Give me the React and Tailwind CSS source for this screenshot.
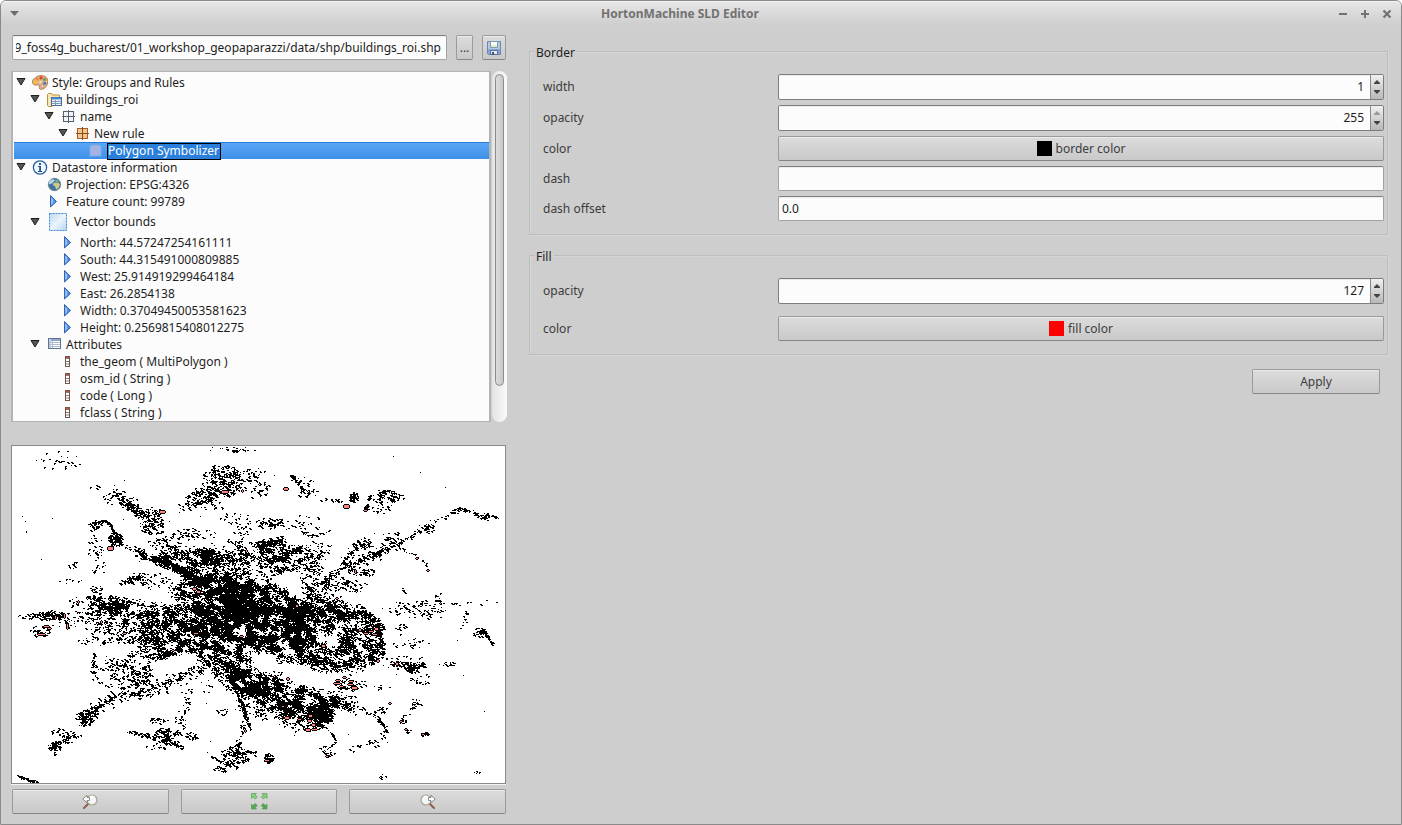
import { useEffect, useRef } from "react";

/* ---------- shared control styles ---------- */
const raised =
  "flex items-center justify-center rounded-[2px] border border-[#9a9a9a] border-b-[#868686] bg-linear-to-b from-[#dcdcdc] to-[#c9c9c9] text-[#3c3c3c] shadow-[inset_0_1px_0_#ececec]";
const field =
  "h-[25px] min-w-0 rounded-[2px] border border-[#a2a2a2] border-t-[#7f7f7f] bg-[#fcfcfc] text-[#1c1c1c] shadow-[inset_0_1px_0_#ececec] outline-none";

/* ---------- tree icons ---------- */
const Svg = ({ w = 16, h = 16, children }) => (
  <svg width={w} height={h} viewBox={`0 0 ${w} ${h}`} aria-hidden="true">
    {children}
  </svg>
);

const icons = {
  palette: (
    <Svg>
      <path
        d="M5 1.500C8-.2 14 .3 15.400 4.100c1 3-.2 7.300-3 9.100-2 1.400-4.400 1.600-5 .3-.5-1.200.6-2.300-.3-3.200-.9-.8-2.200 0-3.800-.2C1 9.800 0 8 .5 5.700 1 4 3.200 3.200 5 1.500Z"
        fill="#e3b284"
        stroke="#a8653a"
        strokeWidth=".8"
      />
      <circle cx="3.300" cy="6.900" r="1.500" fill="#f6c52c" />
      <circle cx="5.300" cy="3.900" r="1.500" fill="#ee8a2e" />
      <circle cx="9" cy="2.900" r="1.600" fill="#e23b2c" />
      <circle cx="12.500" cy="4.600" r="1.500" fill="#4fa653" />
      <circle cx="12.700" cy="8.300" r="1.600" fill="#3b82c4" />
      <circle cx="10.300" cy="11.300" r="1.400" fill="#f4ede6" stroke="#a8653a" strokeWidth=".5" />
      <circle cx="8.500" cy="7" r="1.200" fill="#f3ddc8" />
    </Svg>
  ),
  folder: (
    <Svg>
      <path d="M1.500 13.500v-11l1-1h3l1 1.500h7v3H6v8.500H2.500Z" fill="#f8e6b4" stroke="#c08f3c" />
      <rect x="5.500" y="5.500" width="10" height="8" fill="#eef4fb" stroke="#4a6a94" />
      <path d="M6 6.500h9" stroke="#4a8ad0" strokeWidth="2" />
      <path d="M6 9.500h9M6 11.500h9M9.500 8v5" stroke="#7d99bd" strokeWidth="1" />
    </Svg>
  ),
  grid: (
    <Svg>
      <rect x="3.500" y="2.500" width="10" height="10" fill="#f1f3f6" stroke="#55606d" />
      <path d="M8.500 1v13M2 7.500h13" stroke="#55606d" />
    </Svg>
  ),
  rule: (
    <Svg>
      <rect x="3.500" y="2.500" width="10" height="10" fill="#f3c68f" stroke="#a65f24" />
      <path d="M8.500 1v13M2 7.500h13" stroke="#8a4c1b" />
    </Svg>
  ),
  polygon: (
    <Svg>
      <rect x="2" y="2" width="11" height="11" fill="#a3b4e2" stroke="#84a3e8" />
      <path d="M1 1h2v2H1zM12 1h2v2h-2zM1 12h2v2H1zM12 12h2v2h-2z" fill="#41b2fb" />
    </Svg>
  ),
  info: (
    <Svg>
      <circle cx="8" cy="7.500" r="6.600" fill="#f3f8fd" stroke="#27609f" strokeWidth="1.300" />
      <path d="M7 3h2v2H7zM6 6h3v5h1.200v1H6v-1h1.200V7H6z" fill="#1d5796" />
    </Svg>
  ),
  globe: (
    <Svg>
      <circle cx="8.500" cy="7.500" r="6.200" fill="#3f72b0" stroke="#6b7886" strokeWidth=".8" />
      <path d="M4 3.500c2-1.500 4-1.500 4.500-.5S7 5 6.500 6 4 6.500 3 7.500c-.4-1.500 0-3 1-4Z" fill="#b4d7ea" />
      <path d="M7.500 6c2-1 5-.5 6.500 1-.5 3-2 4.500-3.500 5.500C9 11 10 9.500 8.500 9 7 8.500 6.500 7 7.500 6Z" fill="#d3c982" />
      <path d="M9 2.500c2 0 3.500.8 4.500 2.500l-2 .6L9.500 5Z" fill="#7dac68" />
      <path d="M3 9.500l3 1.500 1 2.400C5 13 3.600 11.600 3 9.500Z" fill="#4d8a5a" />
    </Svg>
  ),
  play: (
    <Svg>
      <path d="M4.500 1.500 10.500 7.500l-6 5.500Z" fill="#4f8ce0" stroke="#3465b4" />
      <path d="M5.200 3.500v7.500l2-2V5.500Z" fill="#9cc2f5" />
    </Svg>
  ),
  bounds: (
    <Svg w={24} h={24}>
      <defs>
        <linearGradient id="bounds-fill" x1="0" y1="0" x2="1" y2="1">
          <stop offset="0" stopColor="#b8d8f4" />
          <stop offset=".5" stopColor="#eaf4fc" />
          <stop offset="1" stopColor="#b4d4f0" />
        </linearGradient>
      </defs>
      <rect x="3.500" y="3.500" width="17" height="17" fill="url(#bounds-fill)" stroke="#4385cc" strokeDasharray="2 1" />
    </Svg>
  ),
  table: (
    <Svg>
      <rect x="2.500" y="1.500" width="12" height="10" fill="#fff" stroke="#5f7494" />
      <path d="M3 3h11" stroke="#8ea6c8" strokeWidth="2" />
      <path d="M4 2v9" stroke="#c5d4e8" strokeWidth="2" />
      <path d="M3 5.500h11M3 7.500h11M3 9.500h11M6.500 4v7" stroke="#b0bdcf" />
    </Svg>
  ),
  column: (
    <Svg>
      <rect x="5.500" y="2.500" width="4" height="10" fill="#fff" stroke="#6d584b" />
      <path d="M6 3.500h3" stroke="#e2403a" />
      <path d="M6 4.500h3M6 7.500h3M6 10h3" stroke="#6d584b" strokeWidth=".8" />
    </Svg>
  ),
};

/* ---------- tree data: [level, icon, label, expandable] ---------- */
const rows = [
  [0, "palette", "Style: Groups and Rules", true],
  [1, "folder", "buildings_roi", true],
  [2, "grid", "name", true],
  [3, "rule", "New rule", true],
  [4, "polygon", "Polygon Symbolizer", false],
  [0, "info", "Datastore information", true],
  [1, "globe", "Projection: EPSG:4326", false],
  [1, "play", "Feature count: 99789", false],
  [1, "bounds", "Vector bounds", true],
  [2, "play", "North: 44.57247254161111", false],
  [2, "play", "South: 44.315491000809885", false],
  [2, "play", "West: 25.914919299464184", false],
  [2, "play", "East: 26.2854138", false],
  [2, "play", "Width: 0.37049450053581623", false],
  [2, "play", "Height: 0.2569815408012275", false],
  [1, "table", "Attributes", true],
  [2, "column", "the_geom ( MultiPolygon )", false],
  [2, "column", "osm_id ( String )", false],
  [2, "column", "code ( Long )", false],
  [2, "column", "fclass ( String )", false],
];
const indent = ["pl-0", "pl-[14px]", "pl-[28px]", "pl-[42px]", "pl-[56px]"];

function Tree() {
  return (
    <div className="flex h-[351px]">
      <ul
        id="tree"
        role="tree"
        aria-label="Style"
        className="min-w-0 flex-1 overflow-hidden border border-r-2 border-l-2 border-[#b4b4b4] bg-[#fcfcfc] pt-[2px] pl-px"
      >
        {rows.map(([level, icon, label, open]) => {
          const selected = icon === "polygon";
          return (
            <li
              key={label}
              role="treeitem"
              aria-selected={selected}
              aria-level={level + 1}
              className={`flex items-center ${icon === "bounds" ? "h-[24px]" : "h-[17px]"} ${indent[level]} ${
                selected ? "border-t border-[#2a7bd6] bg-linear-to-b from-[#5ba6f6] to-[#3d8fe8] text-white" : "text-[#1e1e1e]"
              }`}
            >
              <span className="flex w-[18px] shrink-0 justify-center pr-1">
                {open && (
                  <svg width="10" height="9" viewBox="0 0 10 9" aria-hidden="true">
                    <path d="M1 .5h8L5 7Z" fill="#555" stroke="#1f1f1f" />
                  </svg>
                )}
              </span>
              {icons[icon]}
              <span
                className={`ml-[3px] flex h-[17px] items-center border pr-px whitespace-nowrap ${
                  selected ? "border-black bg-[#2b7fdc]" : "border-transparent"
                }`}
              >
                {label}
              </span>
            </li>
          );
        })}
      </ul>
      <div className="ml-px w-[15px] rounded-full bg-linear-to-r from-[#e4e4e4] to-[#fafafa] px-[3px] pt-[3px]">
        <div
          role="scrollbar"
          aria-controls="tree"
          aria-valuenow={0}
          className="h-[312px] rounded-full border border-[#8c8c8c] bg-linear-to-r from-[#dcdcdc] to-[#c8c8c8]"
        />
      </div>
    </div>
  );
}

/* ---------- map of building footprints ---------- */
const MX = 12;
const MY = 446;
const MW = 493;
const MH = 337;

// [density, x1, y1, x2, y2, ...] filled areas
const areas = [
  [0.36, 205, 575, 240, 572, 268, 584, 300, 598, 340, 606, 382, 622, 384, 652, 362, 669, 330, 671, 300, 663, 262, 656, 244, 664, 250, 684, 240, 698, 218, 676, 196, 655, 190, 622, 198, 596],
  [0.5, 228, 580, 262, 582, 300, 602, 326, 616, 312, 640, 290, 652, 260, 650, 236, 640, 222, 612],
  [0.3, 184, 578, 230, 574, 236, 610, 230, 650, 206, 650, 196, 612],
  [0.5, 234, 664, 256, 672, 286, 678, 290, 686, 320, 692, 340, 696, 352, 706, 332, 712, 322, 728, 306, 718, 286, 718, 264, 708, 240, 690],
  [0.2, 86, 592, 130, 602, 190, 606, 198, 640, 180, 656, 150, 662, 130, 642, 92, 634, 100, 618],
  [0.24, 140, 610, 200, 604, 206, 650, 170, 658, 136, 640],
  [0.4, 86, 596, 104, 598, 142, 606, 146, 616, 110, 616, 92, 608],
  [0.24, 156, 545, 190, 548, 214, 554, 240, 572, 206, 590, 176, 574],
  [0.24, 182, 548, 220, 548, 210, 568, 186, 566],
  [0.18, 214, 538, 258, 544, 284, 556, 282, 575, 236, 574, 210, 556],
  [0.34, 168, 582, 186, 584, 206, 586, 210, 612, 190, 614, 178, 600],
  [0.16, 258, 550, 300, 545, 322, 548, 320, 562, 282, 572, 258, 570],
  [0.2, 298, 590, 330, 594, 360, 606, 380, 622, 340, 620, 300, 610],
  [0.12, 96, 662, 130, 654, 150, 666, 150, 684, 112, 690],
  [0.16, 125, 656, 180, 640, 190, 654, 150, 672, 138, 684, 120, 676],
  [0.12, 270, 714, 296, 718, 320, 722, 322, 732, 290, 728],
];

// [n, cx, cy, rx, ry] blobs
const blobs = [
  [26, 58, 459, 20, 9], [12, 67, 462, 8, 4], [8, 97, 487, 6, 2], [60, 113, 496, 10, 7], [50, 128, 502, 9, 6],
  [60, 148, 511, 14, 4], [190, 152, 524, 11, 10], [110, 198, 496, 12, 7], [360, 222, 480, 17, 14], [70, 212, 492, 14, 5],
  [70, 246, 474, 16, 6], [34, 233, 449, 24, 3], [24, 251, 488, 8, 8], [30, 262, 488, 6, 6], [24, 210, 504, 14, 5],
  [40, 95, 524, 6, 4], [190, 115, 539, 6, 6], [24, 94, 537, 8, 10], [26, 95, 552, 10, 5], [14, 74, 565, 6, 4],
  [24, 96, 567, 10, 6], [10, 70, 581, 12, 2], [70, 163, 543, 14, 6], [80, 193, 534, 20, 5], [40, 235, 520, 14, 8],
  [24, 242, 533, 8, 6], [100, 148, 579, 18, 7], [30, 96, 590, 6, 5], [18, 75, 602, 7, 5], [24, 302, 482, 10, 4],
  [90, 353, 497, 4, 4], [50, 366, 507, 2, 3], [150, 385, 498, 15, 7], [24, 380, 509, 8, 4], [30, 307, 492, 10, 4],
  [20, 330, 500, 10, 2], [90, 270, 523, 12, 5], [50, 300, 523, 18, 8], [70, 362, 544, 10, 5], [60, 391, 541, 10, 9],
  [80, 362, 571, 12, 4], [180, 322, 582, 22, 8], [60, 350, 586, 14, 6], [70, 312, 570, 8, 8], [60, 300, 562, 22, 10],
  [26, 400, 608, 14, 5], [60, 425, 607, 20, 6], [18, 470, 602, 24, 3], [26, 438, 600, 4, 10], [24, 24, 617, 6, 3],
  [180, 46, 615, 14, 4], [80, 40, 631, 9, 5], [90, 72, 620, 22, 8], [50, 88, 614, 10, 6], [120, 84, 718, 8, 7],
  [80, 54, 746, 5, 4], [60, 69, 737, 10, 5], [18, 58, 731, 6, 3], [200, 167, 735, 11, 8], [28, 158, 720, 8, 3],
  [24, 180, 720, 6, 8], [24, 187, 702, 4, 12], [30, 191, 736, 6, 3], [24, 158, 746, 10, 3], [190, 234, 755, 13, 8],
  [40, 220, 768, 6, 4], [26, 250, 753, 7, 3], [16, 205, 686, 8, 5], [14, 222, 711, 6, 3], [90, 268, 758, 5, 4],
  [260, 322, 716, 8, 8], [90, 405, 662, 20, 6], [80, 412, 669, 6, 3], [36, 410, 643, 16, 5], [18, 398, 628, 10, 8],
  [40, 420, 614, 24, 4], [14, 463, 620, 6, 8], [36, 478, 632, 8, 4], [20, 448, 664, 8, 2], [26, 420, 679, 10, 5],
  [16, 382, 687, 8, 2], [26, 415, 703, 5, 4], [26, 402, 721, 3, 2], [16, 407, 730, 3, 2], [30, 424, 734, 3, 2],
  [24, 380, 710, 6, 3], [30, 375, 640, 10, 14], [40, 325, 751, 8, 5], [8, 380, 776, 4, 2], [6, 475, 772, 4, 2],
  [100, 350, 684, 14, 5], [90, 340, 700, 16, 5], [24, 160, 690, 30, 8], [20, 110, 675, 12, 12], [50, 262, 712, 10, 6],
  [110, 270, 545, 14, 4], [90, 316, 548, 14, 6], [150, 310, 661, 30, 4], [40, 100, 640, 20, 5],
];

// [n, width, x1, y1, x2, y2, ...] ribbons that follow roads
const roads = [
  [640, 7, 137, 552, 165, 563, 190, 575, 208, 584],
  [300, 7, 165, 563, 190, 575, 216, 594],
  [110, 9, 118, 500, 132, 508, 146, 516],
  [60, 5, 178, 507, 196, 503, 216, 496],
  [70, 2, 92, 523, 103, 520, 109, 523, 112, 530],
  [20, 4, 118, 541, 137, 552],
  [80, 3, 119, 584, 130, 579, 142, 576],
  [60, 3, 290, 476, 296, 480, 302, 489, 310, 493],
  [280, 6, 318, 584, 345, 567, 368, 557, 392, 546],
  [90, 6, 392, 546, 410, 536, 424, 529, 432, 524],
  [14, 3, 432, 522, 454, 512],
  [120, 4, 452, 512, 460, 509, 474, 513, 482, 517, 488, 514],
  [8, 2, 488, 515, 498, 518],
  [70, 6, 342, 562, 352, 550, 366, 540],
  [22, 4, 396, 547, 410, 553, 422, 561, 430, 571],
  [16, 4, 403, 588, 400, 600, 394, 610],
  [120, 5, 306, 586, 322, 600, 340, 614],
  [50, 8, 94, 655, 92, 670, 98, 680],
  [520, 8, 80, 722, 95, 709, 114, 696, 148, 690, 180, 677, 208, 664],
  [90, 3, 48, 748, 56, 743, 66, 738],
  [24, 2, 54, 746, 54, 756],
  [130, 3, 127, 731, 150, 736, 182, 746],
  [280, 12, 228, 676, 240, 700, 246, 722],
  [70, 6, 244, 722, 238, 744, 236, 752],
  [60, 2, 210, 756, 222, 762, 238, 768],
  [60, 2, 17, 775, 26, 779, 38, 783],
  [160, 8, 300, 686, 320, 700, 352, 707],
  [70, 4, 352, 704, 370, 713, 380, 721, 386, 730],
  [40, 4, 386, 730, 378, 742, 362, 745, 346, 750],
  [50, 1, 325, 727, 332, 734, 335, 742, 328, 748],
  [50, 3, 478, 630, 486, 634, 492, 645],
  [80, 4, 392, 663, 408, 665, 426, 665],
  [14, 3, 400, 720, 410, 710, 418, 702],
  [100, 5, 262, 580, 290, 566, 318, 552],
  [110, 5, 258, 562, 282, 556, 300, 548],
  [180, 5, 258, 546, 270, 542, 284, 540],
  [40, 3, 330, 530, 312, 536, 300, 530],
];

// open spaces cut out of the built-up areas
const voids = [
  [255, 656, 264, 652, 274, 658, 276, 668, 264, 673, 254, 668],
  [287, 663, 312, 668, 316, 680, 300, 686, 287, 680],
  [318, 672, 336, 674, 336, 684, 324, 682],
  [150, 667, 172, 656, 196, 652, 198, 662, 180, 671, 156, 676],
  [324, 637, 337, 635, 338, 645, 328, 649],
  [238, 629, 246, 629, 246, 637, 238, 637],
  [252, 650, 258, 652, 256, 660, 249, 656],
];

const reds = [
  [224, 491, 6, 2], [162, 511, 5, 2], [110, 547, 5, 3], [286, 488, 4, 2], [346, 505, 5, 3], [366, 510, 3, 1],
  [195, 588, 3, 2], [199, 591, 3, 2], [248, 550, 1, 2], [418, 558, 2, 1], [429, 570, 2, 1], [357, 570, 1, 3],
  [80, 601, 1, 2], [66, 614, 1, 4], [57, 616, 1, 3], [40, 634, 7, 1], [46, 626, 5, 1], [50, 628, 3, 1],
  [298, 605, 2, 2], [196, 633, 4, 1], [174, 650, 2, 1], [242, 636, 3, 1], [125, 633, 3, 1], [69, 624, 1, 5],
  [377, 628, 3, 2], [371, 631, 4, 1], [366, 633, 4, 1], [375, 634, 4, 1], [361, 629, 2, 2], [324, 645, 3, 2],
  [379, 660, 2, 2], [398, 663, 2, 2], [289, 678, 2, 2], [338, 680, 4, 1], [336, 683, 6, 1], [342, 686, 3, 1],
  [351, 681, 4, 1], [350, 684, 5, 1], [354, 687, 5, 2], [345, 677, 3, 1], [311, 715, 3, 2], [310, 720, 3, 2],
  [314, 724, 3, 2], [308, 729, 4, 2], [314, 729, 5, 1], [287, 717, 4, 2], [300, 719, 3, 1], [284, 706, 2, 1],
  [402, 721, 2, 1], [407, 729, 2, 1], [424, 734, 2, 1], [267, 760, 4, 1], [247, 730, 1, 2], [328, 756, 2, 1],
  [391, 703, 2, 1], [244, 490, 1, 2], [442, 603, 1, 1], [103, 621, 1, 2], [338, 598, 2, 1],
];

function inside(px, py, poly) {
  let hit = false;
  for (let i = 0, j = poly.length - 2; i < poly.length; j = i, i += 2) {
    const yi = poly[i + 1];
    const yj = poly[j + 1];
    if (yi > py !== yj > py && px < ((poly[j] - poly[i]) * (py - yi)) / (yj - yi) + poly[i]) hit = !hit;
  }
  return hit;
}

function buildMap() {
  let seed = 20190826;
  const rnd = () => {
    seed = (seed * 1664525 + 1013904223) >>> 0;
    return seed / 4294967296;
  };
  const cells = new Uint8Array(MW * MH);
  const put = (x, y, v) => {
    if (x >= MX && y >= MY && x < MX + MW && y < MY + MH) cells[(y - MY) * MW + x - MX] = v;
  };
  const stamp = (fx, fy) => {
    const x = Math.round(fx);
    const y = Math.round(fy);
    const kind = rnd();
    put(x, y, 1);
    if (kind > 0.25) put(x + 1, y, 1);
    if (kind > 0.55) put(x + (kind > 0.75 ? 1 : 0), y + 1, 1);
    if (kind > 0.85) put(x + 2, y + 1, 1);
  };
  const bounds = (poly) => {
    const xs = poly.filter((_, i) => i % 2 === 0);
    const ys = poly.filter((_, i) => i % 2 === 1);
    return [Math.min(...xs), Math.min(...ys), Math.max(...xs), Math.max(...ys)];
  };
  // smooth noise that varies density from one city block to the next
  const NW = 128;
  const lattice = Float32Array.from({ length: NW * NW }, () => rnd());
  const noise = (x, y) => {
    const u = (x * 0.9 + y * 0.4) / 6 + 10;
    const v = (y * 0.9 - x * 0.4) / 4 + 60;
    const i = Math.floor(u);
    const j = Math.floor(v);
    const f = u - i;
    const g = v - j;
    const at = (a, b) => lattice[(b & 127) * NW + (a & 127)];
    return (at(i, j) * (1 - f) + at(i + 1, j) * f) * (1 - g) + (at(i, j + 1) * (1 - f) + at(i + 1, j + 1) * f) * g;
  };
  for (const [density, ...poly] of areas) {
    const [x0, y0, x1, y1] = bounds(poly);
    for (let y = y0; y < y1; y++)
      for (let x = x0; x < x1; x++) {
        const p = density * Math.max(0.12, 0.1 + (noise(x, y) - 0.22) * 3.2);
        if (rnd() < p && inside(x + rnd() * 10 - 5, y + rnd() * 10 - 5, poly)) stamp(x, y);
      }
  }
  for (const [n, cx, cy, rx, ry] of blobs) {
    for (let i = 0; i < n * 0.75; i++) {
      const a = rnd() * Math.PI * 2;
      const r = Math.pow(rnd(), 0.65) * 1.2;
      const x = cx + Math.cos(a) * r * rx;
      const y = cy + Math.sin(a) * r * ry;
      if (rnd() < 0.35 + noise(x, y)) stamp(x, y);
    }
  }
  for (const [n, width, ...pts] of roads) {
    const segs = pts.length / 2 - 1;
    for (let i = 0; i < n * 0.9; i++) {
      const t = rnd() * segs;
      const k = Math.floor(t) * 2;
      const f = t - Math.floor(t);
      const spread = (rnd() + rnd() - 1) * width;
      const x = pts[k] + (pts[k + 2] - pts[k]) * f + spread * 0.5;
      const y = pts[k + 1] + (pts[k + 3] - pts[k + 1]) * f + spread * (rnd() > 0.3 ? 1 : -0.6);
      if (rnd() < 0.3 + noise(x, y)) stamp(x, y);
    }
  }
  for (let i = 0; i < 50; i++) put(Math.round(20 + rnd() * 470), Math.round(455 + rnd() * 300), 1);
  for (const poly of voids) {
    const [x0, y0, x1, y1] = bounds(poly);
    for (let y = y0; y <= y1; y++)
      for (let x = x0; x <= x1; x++) if (inside(x + rnd() * 3 - 1, y + rnd() * 3 - 1, poly)) put(x, y, 0);
  }
  let d = "";
  for (let y = 0; y < MH; y++) {
    for (let x = 0; x < MW; x++) {
      if (!cells[y * MW + x]) continue;
      let e = x;
      while (e < MW && cells[y * MW + e]) e++;
      d += `M${x} ${y}h${e - x}v1h${x - e}z`;
      x = e;
    }
  }
  return d;
}
const footprints = buildMap();

function MapView() {
  return (
    <div className="mt-[23px] mr-px border border-[#8a8a8a] bg-white shadow-[0_1px_0_#f2f2f2]">
      <svg viewBox={`0 0 ${MW} ${MH}`} className="block w-full" shapeRendering="crispEdges" role="img" aria-label="Map preview">
        <path d={footprints} fill="#000" />
        {reds.map(([x, y, w, h]) => (
          <g key={`${x}-${y}`} transform={`translate(${x - MX - 2} ${y - MY})`}>
            <path d={`M0 -1h${w}v1h1v${h}h-1v1h${-w}v-1h-1v${-h}h1z`} fill="#000" />
            <rect width={w} height={h} fill="#ff8080" />
          </g>
        ))}
      </svg>
    </div>
  );
}

function Magnifier({ flip }) {
  return (
    <svg width="16" height="16" viewBox="0 0 16 16" aria-hidden="true">
      <g transform={flip ? "matrix(-1 0 0 1 16 0)" : undefined}>
        <path d="M6 10 2 14" stroke="#8a5d4c" strokeWidth="2" strokeLinecap="round" />
        <circle cx="10" cy="6" r="5" fill="#f3f5f6" stroke="#a6a48f" strokeWidth="1.200" />
        <path d="M7 6.500A3.500 3.500 0 0 1 12 3" stroke="#fff" strokeWidth="1.500" fill="none" />
        <path d="M.8 5 5 1.300V3.500h2.500v3H5v2.200Z" fill="#fff" stroke="#707070" strokeWidth=".8" />
      </g>
    </svg>
  );
}

function FullExtent() {
  const arrow = "M0 0h5L3.700 1.300 5.800 3.400 3.700 5.500 1.500 3.400 0 5Z";
  return (
    <svg width="18" height="18" viewBox="0 0 18 18" aria-hidden="true">
      <g stroke="#4c9a48" strokeWidth=".6">
        <path d={arrow} fill="#86cf7e" transform="translate(1.500 .5)" />
        <path d={arrow} fill="#86cf7e" transform="matrix(-1 0 0 1 17 .5)" />
        <path d={arrow} fill="#55a653" transform="matrix(1 0 0 -1 1.500 16)" />
        <path d={arrow} fill="#55a653" transform="matrix(-1 0 0 -1 17 16)" />
      </g>
    </svg>
  );
}

function Spinner({ id, value, max }) {
  return (
    <div className="flex h-[26px] overflow-hidden rounded-[2px] border border-[#7d7d7d] bg-[#fcfcfc]">
      <input
        id={id}
        type="text"
        inputMode="numeric"
        defaultValue={value}
        className="min-w-0 flex-1 bg-transparent pr-[6px] text-right text-[#1c1c1c] shadow-[inset_0_1px_0_#ececec] outline-none"
      />
      <div className="flex w-[13px] flex-col items-center justify-center gap-[6px] border-l border-[#8a8a8a] bg-linear-to-b from-[#f0f0f0] to-[#b8b8b8]">
        <button type="button" aria-label="Increase" disabled={max}>
          <svg width="6" height="4" viewBox="0 0 6 4" className="block" aria-hidden="true">
            <path d="M0 4V3L3 0l3 3v1Z" fill={max ? "#9a9a9a" : "#444"} />
          </svg>
        </button>
        <button type="button" aria-label="Decrease">
          <svg width="6" height="4" viewBox="0 0 6 4" className="block" aria-hidden="true">
            <path d="M0 0v1l3 3 3-3V0Z" fill="#444" />
          </svg>
        </button>
      </div>
    </div>
  );
}

function Group({ title, spacing, children }) {
  return (
    <fieldset className="min-w-0 border border-[#bdbdbd] pr-[3px] pb-[13px] pl-[13px] shadow-[inset_1px_1px_0_#d6d6d6,1px_1px_0_#d6d6d6]">
      <legend className="-ml-[9px] h-4 bg-[#cecece] px-[2px] leading-5 text-[#1e1e1e]">{title}</legend>
      <div className={`grid grid-cols-[235fr_606fr] items-center pt-[15px] ${spacing}`}>{children}</div>
    </fieldset>
  );
}

function ColorButton({ id, label, swatch }) {
  return (
    <button id={id} type="button" className={`${raised} h-[25px] gap-1`}>
      <span className={`size-[15px] ${swatch}`} />
      {label}
    </button>
  );
}

export default function App() {
  const path = useRef(null);
  useEffect(() => {
    path.current.scrollLeft = path.current.scrollWidth;
  }, []);

  return (
    <div className="flex min-h-screen flex-col rounded-t-[6px] border border-[#8a8a8a] bg-[#cecece] font-['Noto_Sans',sans-serif] text-[12px] leading-4 text-[#3c3c3c]">
      <header className="flex h-[24px] items-center rounded-t-[5px] border-t border-[#f6f6f6] bg-linear-to-b from-[#e6e6e6] to-[#cecece] px-[9px]">
        <button type="button" aria-label="Window menu" className="w-[18px]">
          <svg width="9" height="5" viewBox="0 0 9 5" aria-hidden="true">
            <path d="M0 0h9L4.500 5Z" fill="#6e6e6e" />
          </svg>
        </button>
        <h1 className="flex-1 text-center font-bold text-[#727272]">HortonMachine SLD Editor</h1>
        <div className="flex w-[60px] items-center justify-end gap-3">
          <button type="button" aria-label="Minimize">
            <svg width="10" height="10" viewBox="0 0 10 10" className="block" aria-hidden="true">
              <path d="M1 5h8" stroke="#727272" strokeWidth="2" />
            </svg>
          </button>
          <button type="button" aria-label="Maximize">
            <svg width="10" height="10" viewBox="0 0 10 10" className="block" aria-hidden="true">
              <path d="M1 5h8M5 1v8" stroke="#727272" strokeWidth="2" />
            </svg>
          </button>
          <button type="button" aria-label="Close">
            <svg width="10" height="10" viewBox="0 0 10 10" className="block" aria-hidden="true">
              <path d="m1.500 1.500 7 7M8.500 1.500l-7 7" stroke="#727272" strokeWidth="2.200" />
            </svg>
          </button>
        </div>
      </header>

      <main className="grid flex-1 grid-cols-[496fr_859fr] items-start gap-[22px] pr-[13px] pb-[10px] pl-[10px]">
        <section className="min-w-0 pt-[10px]">
          <div className="mb-[11px] flex pr-px pl-px">
            <input
              ref={path}
              type="text"
              aria-label="File path"
              defaultValue="2019_foss4g_bucharest/01_workshop_geopaparazzi/data/shp/buildings_roi.shp"
              className={`${field} flex-1 pr-[5px] pl-[3px]`}
            />
            <button type="button" aria-label="Browse" className={`${raised} ml-[9px] h-[25px] w-[17px] shrink-0`}>
              ...
            </button>
            <button type="button" aria-label="Save" className={`${raised} ml-[9px] h-[25px] w-[24px] shrink-0`}>
              <svg width="16" height="16" viewBox="0 0 16 16" aria-hidden="true">
                <path d="M1.500 1.500h13v13h-12l-1-1Z" fill="#b4c8e6" stroke="#6d86ac" />
                <path d="M2 9h12v5H2z" fill="#86a4d8" />
                <path d="M4.500 1.500h7v6h-7Z" fill="#fbfdf8" stroke="#7d9ba8" />
                <path d="M5 6h6" stroke="#c3dca8" />
                <path d="M4.500 10.500h7v4h-7Z" fill="#e6e9ee" stroke="#54709c" />
                <path d="M6 12h2v3H6z" fill="#3f5472" />
              </svg>
            </button>
          </div>

          <Tree />
          <MapView />

          <div className="mt-[5px] grid grid-cols-3 gap-3 pr-px pl-px">
            <button type="button" aria-label="Previous zoom" className={`${raised} h-[25px]`}>
              <Magnifier />
            </button>
            <button type="button" aria-label="Zoom to full extent" className={`${raised} h-[25px]`}>
              <FullExtent />
            </button>
            <button type="button" aria-label="Next zoom" className={`${raised} h-[25px]`}>
              <Magnifier flip />
            </button>
          </div>
        </section>

        <section className="flex min-w-0 flex-col pt-[18px]">
          <Group title="Border" spacing="gap-y-[5px]">
            <label htmlFor="border-width">width</label>
            <Spinner id="border-width" value="1" />
            <label htmlFor="border-opacity">opacity</label>
            <Spinner id="border-opacity" value="255" max />
            <label htmlFor="border-color">color</label>
            <ColorButton id="border-color" label="border color" swatch="bg-black" />
            <label htmlFor="dash">dash</label>
            <input id="dash" type="text" className={`${field} px-[3px]`} />
            <label htmlFor="dash-offset">dash offset</label>
            <input id="dash-offset" type="text" defaultValue="0.0" className={`${field} px-[3px]`} />
          </Group>
          <div className="h-3" />
          <Group title="Fill" spacing="gap-y-3">
            <label htmlFor="fill-opacity">opacity</label>
            <Spinner id="fill-opacity" value="127" />
            <label htmlFor="fill-color">color</label>
            <ColorButton id="fill-color" label="fill color" swatch="bg-[#ff0000]" />
          </Group>
          <button type="button" className={`${raised} mt-[14px] mr-2 h-[25px] w-32 self-end`}>
            Apply
          </button>
        </section>
      </main>
    </div>
  );
}
